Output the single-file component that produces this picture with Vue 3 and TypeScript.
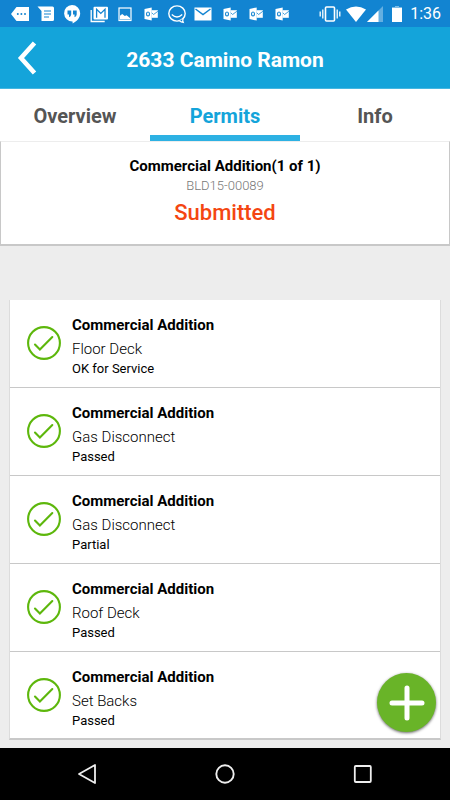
<script setup lang="ts">
import { ref } from 'vue'

interface Inspection {
  id: number
  permit: string
  name: string
  result: string
}

type Notice = 'more' | 'message' | 'hangouts' | 'gmail' | 'image' | 'outlook' | 'chat' | 'mail'

const notices: Notice[] = [
  'more', 'message', 'hangouts', 'gmail', 'image', 'outlook',
  'chat', 'mail', 'outlook', 'outlook', 'outlook',
]

const tabs = ['Overview', 'Permits', 'Info']
const activeTab = ref('Permits')

const inspections: Inspection[] = [
  { id: 1, permit: 'Commercial Addition', name: 'Floor Deck', result: 'OK for Service' },
  { id: 2, permit: 'Commercial Addition', name: 'Gas Disconnect', result: 'Passed' },
  { id: 3, permit: 'Commercial Addition', name: 'Gas Disconnect', result: 'Partial' },
  { id: 4, permit: 'Commercial Addition', name: 'Roof Deck', result: 'Passed' },
  { id: 5, permit: 'Commercial Addition', name: 'Set Backs', result: 'Passed' },
]
</script>

<template>
  <div class="screen">
    <div class="status-bar">
      <div class="notices">
        <svg v-for="(n, i) in notices" :key="i" class="glyph" viewBox="0 0 20 20" aria-hidden="true">
          <template v-if="n === 'more'">
            <path d="M6.5 3H19v14H6.5L1 10z" fill="#fff" />
            <g fill="#1284d1">
              <circle cx="7.800" cy="10" r="1" /><circle cx="11.400" cy="10" r="1" /><circle cx="15" cy="10" r="1" />
            </g>
          </template>
          <template v-else-if="n === 'message'">
            <path d="M1.500 2.500h15q1.500 0 1.500 1.500v11.500q0 1.500-1.500 1.500H5.500V7z" fill="#fff" />
            <path d="M8 7h7M8 10h7M8 13h5" stroke="#1284d1" stroke-width="1.100" />
          </template>
          <template v-else-if="n === 'hangouts'">
            <path d="M10 1a8.200 8.200 0 1 0 .6 16.400V19.500c4.500-2.200 7.600-5.800 7.600-10.200A8.200 8.200 0 0 0 10 1z" fill="#fff" />
            <path d="M5.500 6.500h3.700v4q-.2 2-2.200 2.700v-2.800H5.500zM11 6.500h3.700v4q-.2 2-2.200 2.700v-2.800H11z" fill="#1284d1" />
          </template>
          <template v-else-if="n === 'gmail'">
            <path d="M2.200 6v11.500h13.500" fill="none" stroke="#fff" stroke-width="1.300" />
            <rect x="4.500" y="2.800" width="14.500" height="12.700" rx="1" fill="#fff" />
            <path d="M7.600 13.800V5.200l4.200 4.200L16 5.200v8.600" fill="none" stroke="#1284d1" stroke-width="1.300" />
          </template>
          <template v-else-if="n === 'image'">
            <rect x="4" y="4" width="12" height="12.500" fill="none" stroke="#fff" stroke-width="1.200" />
            <path d="M5 15.500v-3.700l2.200-1.800 2.600 2 1.800-.8L15 14v1.500z" fill="#fff" />
          </template>
          <template v-else-if="n === 'outlook'">
            <path d="M10.500 6.200H16.800V13.800H10.500z" fill="#fff" />
            <path d="M3.500 5l7.200-1.600v13.200L3.500 15z" fill="#fff" />
            <ellipse cx="7" cy="10" rx="1.500" ry="2" fill="none" stroke="#1284d1" stroke-width="1.100" />
            <path d="M10.800 8.800l1.800 1.700 4.200-3.200" fill="none" stroke="#1284d1" stroke-width=".8" />
          </template>
          <template v-else-if="n === 'chat'">
            <ellipse cx="10" cy="9.500" rx="8.200" ry="7.600" fill="none" stroke="#fff" stroke-width="1.400" />
            <path d="M12.500 16.500q1.500 1.700 3.800 2-.9-1.800-.4-3.600" fill="#1284d1" stroke="#fff" stroke-width="1.200" />
            <path d="M4.800 10.500Q10 15.500 15.200 10.500" fill="none" stroke="#fff" stroke-width="1.300" />
          </template>
          <template v-else>
            <rect x="1.500" y="3.500" width="17" height="13" fill="#fff" />
            <path d="M2.500 5l7.500 5.500L17.500 5" fill="none" stroke="#1284d1" stroke-width="1.500" />
          </template>
        </svg>
      </div>
      <div class="system">
        <svg class="vibrate" viewBox="0 0 22 18" aria-hidden="true">
          <rect x="6.500" y="2" width="9" height="14" rx="1" fill="none" stroke="#fff" stroke-width="1.600" />
          <path d="M3.800 4.500v9M1.200 6.500v5M18.200 4.500v9M20.800 6.500v5" stroke="#fff" stroke-width="1.300" />
        </svg>
        <svg class="wifi" viewBox="0 0 20 16" aria-hidden="true">
          <path d="M0 3.500Q10-2.500 20 3.500L10 16z" fill="#fff" />
        </svg>
        <svg class="signal" viewBox="0 0 16 16" aria-hidden="true">
          <path d="M0 16L16 0v16z" fill="#fff" opacity=".35" />
          <path d="M0 16L11.500 4.500V16z" fill="#fff" />
        </svg>
        <svg class="battery" viewBox="0 0 10 16" aria-hidden="true">
          <path d="M3 0h4v1h3v2H0V1h3z" fill="#fff" opacity=".45" />
          <path d="M0 2h10v14H0z" fill="#fff" />
        </svg>
        <time class="clock">1:36</time>
      </div>
    </div>

    <header class="app-bar">
      <button class="back" type="button" aria-label="Back">
        <svg viewBox="0 0 20 34" aria-hidden="true">
          <path d="M17.500 2L4 17l13.500 15" fill="none" stroke="#fff" stroke-width="4.600" />
        </svg>
      </button>
      <h1 class="title">2633 Camino Ramon</h1>
    </header>

    <nav class="tabs">
      <button
        v-for="tab in tabs"
        :key="tab"
        type="button"
        class="tab"
        :class="{ active: tab === activeTab }"
        @click="activeTab = tab"
      >{{ tab }}</button>
    </nav>

    <main class="content">
      <section class="summary">
        <h2 class="summary-title">Commercial Addition(1 of 1)</h2>
        <p class="summary-number">BLD15-00089</p>
        <p class="summary-status">Submitted</p>
      </section>

      <ul class="list">
        <li v-for="item in inspections" :key="item.id" class="row">
          <svg class="check" viewBox="0 0 34 34" aria-hidden="true">
            <circle cx="17" cy="17" r="15.900" fill="none" stroke="#5db70c" stroke-width="2.100" />
            <path d="M8 18.600l4.900 5L25.300 11" fill="none" stroke="#5db70c" stroke-width="2.100" stroke-linecap="round" />
          </svg>
          <div class="details">
            <h3 class="permit">{{ item.permit }}</h3>
            <p class="name">{{ item.name }}</p>
            <p class="result">{{ item.result }}</p>
          </div>
        </li>
      </ul>

      <button class="add" type="button" aria-label="Add inspection">
        <svg viewBox="0 0 36 36" aria-hidden="true">
          <path d="M18 3v30M3 18h30" stroke="#fff" stroke-width="5" stroke-linecap="round" />
        </svg>
      </button>
    </main>

    <footer class="system-nav">
      <button type="button" aria-label="Back">
        <svg viewBox="0 0 22 22" aria-hidden="true">
          <path d="M19 2v18L3 11z" fill="none" stroke="#eee" stroke-width="1.800" stroke-linejoin="round" />
        </svg>
      </button>
      <button type="button" aria-label="Home">
        <svg viewBox="0 0 22 22" aria-hidden="true">
          <circle cx="11" cy="11" r="8.700" fill="none" stroke="#eee" stroke-width="1.900" />
        </svg>
      </button>
      <button type="button" aria-label="Recent apps">
        <svg viewBox="0 0 22 22" aria-hidden="true">
          <rect x="2.800" y="3" width="16" height="16" rx="1" fill="none" stroke="#eee" stroke-width="1.800" />
        </svg>
      </button>
    </footer>
  </div>
</template>

<style>
body {
  margin: 0;
  background: #ededed;
}
</style>

<style scoped>
.screen {
  display: flex;
  flex-direction: column;
  min-height: 100vh;
  background: #ededed;
  color: #000;
  font-family: Roboto, "Liberation Sans", sans-serif;
}

h1, h2, h3, p, ul {
  margin: 0;
  padding: 0;
}

button {
  border: 0;
  padding: 0;
  background: none;
  font: inherit;
  cursor: pointer;
}

svg {
  display: block;
}

.status-bar {
  display: flex;
  align-items: center;
  justify-content: space-between;
  height: 27px;
  padding: 0 9px 0 7px;
  background: #1284d1;
  color: #fff;
}

.notices {
  display: grid;
  grid-template-columns: repeat(11, 1fr);
  justify-items: center;
  width: 288px;
}

.glyph {
  width: 20px;
  height: 20px;
}

.system {
  display: flex;
  align-items: center;
}

.vibrate {
  width: 22px;
  height: 18px;
}

.wifi {
  width: 20px;
  height: 16px;
  margin-left: 5px;
}

.signal {
  width: 16px;
  height: 16px;
  margin-left: 1px;
}

.battery {
  width: 10px;
  height: 16px;
  margin-left: 9px;
}

.clock {
  margin-left: 8px;
  font-size: 16px;
  line-height: 20px;
}

.app-bar {
  display: grid;
  grid-template-columns: 56px 1fr 56px;
  align-items: center;
  height: 62px;
  border-bottom: 1px solid #45b7e1;
  box-sizing: border-box;
  background: #14a4da;
  color: #fff;
}

.back {
  display: flex;
  align-items: center;
  height: 60px;
  padding-left: 17px;
}

.back svg {
  width: 20px;
  height: 34px;
}

.title {
  padding-top: 4px;
  font-size: 21px;
  font-weight: 700;
  line-height: 28px;
  text-align: center;
}

.tabs {
  display: grid;
  grid-template-columns: repeat(3, 1fr);
  height: 52px;
  background: #fff;
}

.tab {
  border-bottom: 6px solid transparent;
  padding-top: 8px;
  color: #555;
  font-size: 20px;
  font-weight: 700;
}

.tab.active {
  border-bottom-color: #2db1e3;
  color: #14a4da;
}

.content {
  position: relative;
  display: flex;
  flex: 1;
  flex-direction: column;
  gap: 54px;
  padding-bottom: 8px;
}

.summary {
  display: flex;
  flex-direction: column;
  align-items: center;
  height: 105px;
  box-sizing: border-box;
  border: 1px solid #c8c8c8;
  border-top-color: #ededed;
  border-bottom-width: 2px;
  padding-top: 14px;
  background: #fff;
}

.summary-title {
  font-size: 15px;
  font-weight: 700;
  line-height: 20px;
}

.summary-number {
  color: #777;
  font-size: 13px;
  font-weight: 300;
  line-height: 20px;
}

.summary-status {
  color: #f44611;
  font-size: 22px;
  font-weight: 500;
  line-height: 34px;
}

.list {
  margin: 0 9px;
  border: 1px solid #dcdcdc;
  border-top: 0;
  border-bottom: 2px solid #c8c8c8;
  background: #fff;
  list-style: none;
}

.row {
  display: flex;
  align-items: flex-start;
  gap: 11px;
  height: 88px;
  box-sizing: border-box;
  border-bottom: 1px solid #c8c8c8;
  padding: 13px 17px 0;
}

.row:last-child {
  height: 86px;
  border-bottom: 0;
}

.check {
  width: 34px;
  height: 34px;
  margin-top: 13px;
}

.permit {
  font-size: 15px;
  font-weight: 700;
  line-height: 24px;
}

.name {
  font-size: 15px;
  font-weight: 300;
  line-height: 24px;
}

.result {
  font-size: 13px;
  line-height: 16px;
}

.add {
  position: absolute;
  right: 14px;
  bottom: 16px;
  display: grid;
  place-items: center;
  width: 59px;
  height: 59px;
  border-radius: 50%;
  background: #69b428;
  box-shadow: 0 1px 3px rgba(0, 0, 0, 0.6);
}

.add svg {
  width: 36px;
  height: 36px;
}

.system-nav {
  display: flex;
  align-items: center;
  justify-content: center;
  gap: 116px;
  height: 52px;
  background: #000;
}

.system-nav svg {
  width: 22px;
  height: 22px;
}
</style>
